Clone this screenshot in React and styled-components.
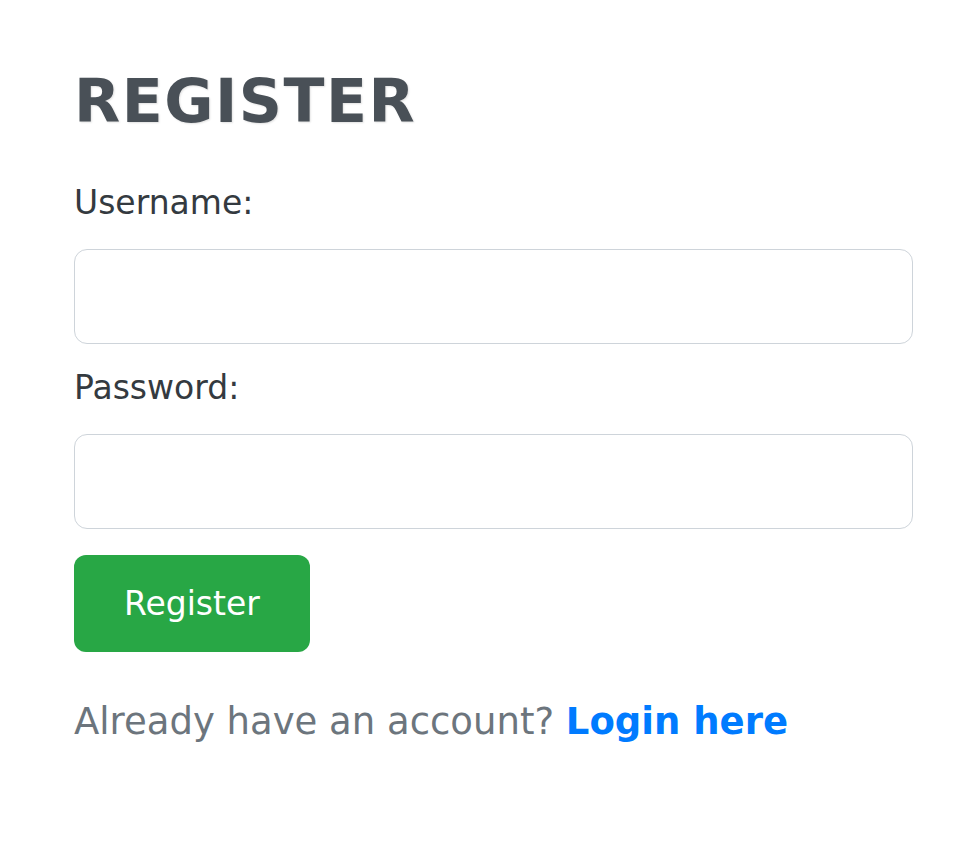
import React from "react";
import styled, { createGlobalStyle } from "styled-components";

const Global = createGlobalStyle`
  html, body { margin: 0; padding: 0; background: #ffffff; }
  body { font-family: "DejaVu Sans", "Noto Sans", sans-serif; }
  * { box-sizing: border-box; }
`;

const Page = styled.main`
  padding: 65px 0 0 74px;
`;

const Form = styled.form`
  width: 839px;
  display: flex;
  flex-direction: column;
`;

const Title = styled.h1`
  margin: 0 0 42px;
  font-size: 60px;
  line-height: 72px;
  font-weight: 700;
  letter-spacing: 1.5px;
  color: #495057;
  text-shadow: 1px 1px 2px rgba(0, 0, 0, 0.12);
`;

const Field = styled.div`
  display: flex;
  flex-direction: column;
  margin-bottom: ${(p) => p.$gap || 20}px;
`;

const Label = styled.label`
  font-size: 33px;
  line-height: 48px;
  color: #343a40;
  margin-bottom: 22px;
`;

const Input = styled.input`
  height: 95px;
  width: 100%;
  border: 1.5px solid #ced4da;
  border-radius: 13px;
  padding: 0 24px;
  font-size: 32px;
  font-family: inherit;
  outline: none;
  background: #fff;
`;

const Button = styled.button`
  align-self: flex-start;
  height: 97px;
  padding: 0 50px;
  border: none;
  border-radius: 12px;
  background: #28a745;
  color: #ffffff;
  font-family: inherit;
  font-size: 33px;
  cursor: pointer;
`;

const Footer = styled.p`
  margin: 44px 0 0;
  font-size: 37px;
  line-height: 52px;
  color: #6c757d;
`;

const LoginLink = styled.a`
  color: #007bff;
  font-weight: 700;
  text-decoration: none;
`;

export default function App() {
  return (
    <>
      <Global />
      <Page>
        <Form onSubmit={(e) => e.preventDefault()}>
          <Title>REGISTER</Title>
          <Field>
            <Label htmlFor="username">Username:</Label>
            <Input id="username" type="text" />
          </Field>
          <Field $gap={26}>
            <Label htmlFor="password">Password:</Label>
            <Input id="password" type="password" />
          </Field>
          <Button type="submit">Register</Button>
          <Footer>
            Already have an account? <LoginLink href="#">Login here</LoginLink>
          </Footer>
        </Form>
      </Page>
    </>
  );
}
